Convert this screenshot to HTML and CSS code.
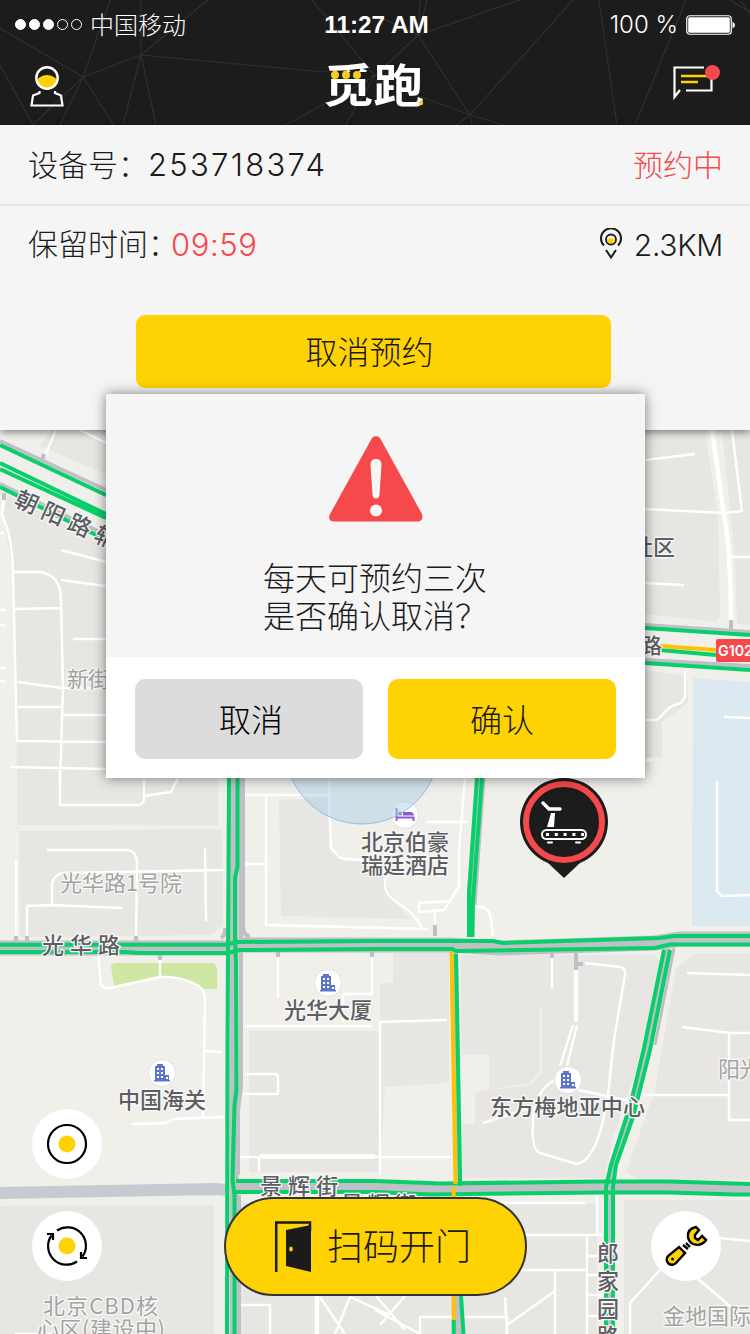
FILE: index.html
```html
<!DOCTYPE html>
<html lang="zh-CN">
<head>
<meta charset="utf-8">
<title>觅跑</title>
<link rel="stylesheet" href="styles.css">
</head>
<body>
<div class="screen">
  <header class="header">
    <svg class="header-mesh" viewBox="0 0 750 125" aria-hidden="true">
      <path d="M0 28L83 77L141 55L324 72L375 76M110 0L83 77L33 125M83 77L114 125M141 0V55L208 0M141 55L123 125M141 55L156 125M0 65L33 125M83 77L60 125M312 0L375 76L286 125M375 76L345 125M375 76L418 35L520 0M418 35L427 0M418 35L420 0M375 15L418 35L470 115L375 80M470 115L573 0M470 115L456 125M470 115L505 125M470 115L472 125M599 0L617 125M686 0L635 125M730 0L750 12M740 0L750 14"/>
    </svg>
    <div class="status">
      <div class="carrier">
        <span class="dots"><i class="on"></i><i class="on"></i><i class="on"></i><i></i><i></i></span>
        <span class="operator">中国移动</span>
      </div>
      <div class="clock">11:27 AM</div>
      <div class="power">
        <span>100 %</span>
        <svg width="50" height="20" viewBox="0 0 50 20"><rect x=".75" y=".75" width="44.5" height="18.5" rx="3" fill="none" stroke="#fff" stroke-width="1.2"/><rect x="2.2" y="2.2" width="41.6" height="15.6" rx="1.5" fill="#fff"/><path d="M46.5 6.5Q49 8 49 10T46.5 13.5Z" fill="#fff"/></svg>
      </div>
    </div>
    <nav class="nav">
      <svg class="user" width="36" height="42" viewBox="0 0 36 42">
        <path d="M7.500 13Q17 5 26.500 13Q26 23 17 23T7.500 13Z" fill="#ffd303"/>
        <circle cx="17" cy="12" r="10.700" fill="none" stroke="#fff" stroke-width="2.400"/>
        <path d="M9.500 25V27L3 29.500L1.500 39.500H32.500L31 29.500L25 27V25" fill="none" stroke="#fff" stroke-width="2.200"/>
      </svg>
      <svg class="brand" width="108" height="46" viewBox="0 0 108 46">
        <text x="1" y="40" textLength="101" lengthAdjust="spacingAndGlyphs">觅跑</text>
        <path d="M3 10H48V17H3Z" fill="#1c1c1c"/>
        <g fill="#f9cc1c"><circle cx="13" cy="13" r="4"/><circle cx="24" cy="13" r="4"/><circle cx="35" cy="13" r="4"/><circle cx="99" cy="41" r="2.200"/></g>
      </svg>
      <svg class="message" width="48" height="40" viewBox="0 0 48 40">
        <path d="M32 2.500H2.500V32L8 25M14 25.500H39.500V14" fill="none" stroke="#fff" stroke-width="2.200"/>
        <path d="M9 11H35M9 17H26" stroke="#ffd303" stroke-width="2.400"/>
        <circle cx="40.500" cy="7.500" r="7.500" fill="#f6494b"/>
      </svg>
    </nav>
  </header>

  <section class="booking">
    <div class="row row-device">
      <div><span class="label">设备号：</span><span class="number">253718374</span></div>
      <span class="state">预约中</span>
    </div>
    <div class="row row-time">
      <div><span class="label">保留时间：</span><span class="timer">09:59</span></div>
      <div class="distance">
        <svg width="24" height="32" viewBox="0 0 24 32" fill="none" stroke="#1b1b1b"><path d="M5 17.500A10 10 0 1 1 19 17.500" stroke-width="2"/><circle cx="12" cy="11.500" r="5" stroke-width="1.800"/><path d="M8 11.500Q12 9 16 11.500A4 4 0 0 1 8 11.500Z" fill="#ffd303" stroke="none"/><path d="M7 22L12 29.500L17 22" stroke-width="2"/></svg>
        <span>2.3KM</span>
      </div>
    </div>
    <button class="cancel-booking">取消预约</button>
  </section>

  <main class="map">
    <svg class="map-canvas" viewBox="0 430 750 904">
      <rect y="430" width="750" height="904" fill="#f1efea"/>
      <g class="block">
        <path d="M52 430H106V474L40 446ZM8 495L106 545V778H17L14 580L3 515ZM17 740H218V825H17ZM19 831L222 829L223 925L211 935L20 937Z"/>
        <path d="M645 430H705L718 515L720 615L716 622L645 614ZM722 430H750V625L737 624L735 560ZM645 670L687 676L688 703L662 722V757H645Z"/>
        <path d="M279 800L327 798L330 850L343 861L384 863Q383 892 410 919L281 916ZM249 1031H380V1172H249Z"/>
        <path d="M393 953H449V1083L385 1087L380 1172V983H393ZM461 955H655L660 962L636 1070L614 1135L604 1178H462ZM697 953H750V1180H640L626 1172L655 1090L676 968Z"/>
        <path d="M0 1206L214 1205V1334H0ZM240 1203H597V1334H240ZM624 1200H750V1334H624Z"/>
      </g>
      <path class="patch" d="M462 1055H489V1090L531 1085L542 1073V1007H540V1071L530 1083L475 1092V1124H462ZM385 1087L450 1083V1175H385Z"/>
      <path d="M693 678L750 682V926H692Z" fill="#dde9f0"/>
      <path d="M111 966Q112 963 116 963H214L217 968V989H204L192 981L162 976L114 986Z" fill="#cfe7a5"/>

      <g class="lane">
        <path d="M56 430L44 458M80 430L106 443M4 493L2 515Q12 535 13 572L17 741L106 742M14 572H40Q61 575 61 600L63 690L60 778M61 580L106 586M15 609L61 608M73 639H106M18 682L61 688H106M18 707H61M62 715H106M61 550L106 562M10 767L106 769M0 610H6M0 625H5M0 668H6M0 681H5M0 534L4 532"/>
        <path d="M645 460L695 454M645 509L725 513L742 511L732 430M731 557H750M645 583L684 585M685 671V697L681 703Q671 705 667 710L657 720H645M645 760H653M724 717L750 718M717 781V891L722 896L750 895"/>
        <path d="M60 770V805H138Q144 805 144 798V770M144 796L171 792L178 778M47 850H128Q137 852 137 862L136 940M52 905V883Q55 873 65 873L225 870M205 848L206 921M16 860V940M27 940V906L52 905L122 908"/>
        <path d="M98 955L101 984Q103 989 110 988L160 977Q180 976 197 985Q205 990 205 1000L203 1117M160 957V976M205 1051L222 1052M132 1124L166 1123L174 1119L224 1117"/>
        <path d="M245 795H330M266 796V925L428 929M245 864H265M329 778V798L331 848L340 858L372 861M278 957V998M372 955V994H343V1022M245 1026H372M245 1074H275Q278 1074 278 1078V1094H243M238 1157H258M259 1171V1157"/>
        <path d="M465 778L459 850V887L444 910L419 912V903L450 901L456 890M427 822H468M385 870V885Q385 895 398 903Q415 913 422 928M475 907Q490 905 491 920L493 936M435 913V930"/>
        <path d="M552 955V988M585 963L620 967Q626 968 625 975L614 1040L608 1095Q598 1160 577 1164L540 1153Q531 1150 533 1120T555 1080M578 1090L630 1101M483 1123L530 1108M573 1025L560 1066M577 1025L567 1066M380 1175V1022L447 1020M259 1157H450"/>
        <path d="M687 973L750 975M682 1027L730 1033H750M729 1033V1120H750M643 1095H729M729 1040V1095"/>
        <path d="M240 1305H270V1334M320 1297L345 1334M350 1297L335 1334M350 1297L390 1315M376 1296L405 1330M375 1310L420 1334M405 1296L380 1325M500 1203H585M597 1195V1234M520 1235H605M587 1235V1334M520 1270H587M555 1270V1334M555 1291L507 1325M587 1256H605M587 1275H605M587 1295H605M587 1316H605M505 1297L507 1334M420 1334V1317H507V1334M660 1270L630 1303V1334M697 1278L730 1306M720 1238L750 1241M15 1334H70"/>
      </g>
      <g class="lane wide"><path d="M712 430L724 515Q731 550 731 625M576 970V1022M259 1156.500H375M317 1296V1334"/></g>

      <g class="asphalt">
        <path d="M0 441L106 490M0 484L110 537M645 625L750 632M645 660L750 666M44 454L42 461M4 493L4 500M731 620V630" stroke-width="4"/>
        <path d="M0 948H228L240 945H450L500 948L655 943L680 939H750" stroke-width="15"/>
        <path d="M243 778V925Q243 936 250 936M221 938Q226 935 225 928" stroke-width="4"/>
        <path d="M234 778V1334" stroke-width="9"/>
        <path d="M241 778V1086L238 1110V1175M239 1195V1334" stroke-width="4"/>
        <path d="M235 1187H375L440 1189L600 1187H670L750 1190" stroke-width="12"/>
        <path d="M480 778L471 893V937M454 952L458 1180M459 1296V1334M667 948L647 1048L631 1110L613 1165L610 1187V1334" stroke-width="8"/>
        <path d="M484 778L475 905M674 948L655 1045" stroke-width="3"/>
        <path d="M576 953V970M435 925V936M576 964H583M552 953V958M372 952V957M278 952V957M160 955V960M136 936V942M27 936V942M16 936V942" stroke-width="4"/>
        <path d="M0 1193L215 1189L226 1190" stroke="#c7cbd0" stroke-width="12"/>
      </g>

      <g class="traffic">
        <path d="M0 445L106 495M0 463L106 514M0 469L106 518M0 487L106 540M645 628L750 635M660 650L716 655M645 663L750 670"/>
        <path d="M229 778L227.500 1040L227 1334M237.500 778V867L235 878V940L236 960L236.500 1090L234.500 1105L232.500 1180L234.500 1195V1334"/>
        <path d="M0 944.700H226L237 942L375 941H493L503 943L660 938L675 936H750M0 952H125L140 953H228L240 950L375 949H452L456 951L655 948L670 944.500H750"/>
        <path d="M477 778L469 893V937M482 778L473 900L472 937M456 954L460 1178V1186M453.700 1320V1334M461 1296L463.500 1334"/>
        <path d="M664 950L644 1048L631 1103L611 1165L606 1187V1334M670 950L650 1050L633 1117L616 1165L613 1187V1334"/>
        <path d="M236 1181H375L440 1183.500L600 1181.500H670L750 1184M236 1192H375L430 1194.500L600 1192.500H670L735 1194.500H750"/>
        <path class="slow" d="M660 646L716 650M451.500 952L455.500 1184M453.700 1187V1320"/>
      </g>

      <g class="poi">
        <g transform="translate(405 815)"><circle r="13.500"/><path d="M-8.500 -7V6M-8.500 2.500H9" fill="none" stroke="#875bd8" stroke-width="1.800"/><path d="M-2 -3H5Q9 -3 9 .5H-2ZM7.500 2H9.500V6H7.500Z" fill="#875bd8"/><circle class="head" cx="-5" cy="-1.500" r="1.900"/></g>
        <g transform="translate(328 983)"><circle r="13.500"/><use href="#tower"/></g>
        <g transform="translate(162 1073)"><circle r="13.500"/><use href="#tower"/></g>
        <g transform="translate(568 1080)"><circle r="13.500"/><use href="#tower"/></g>
      </g>
      <circle cx="362" cy="747" r="77" fill="#a5cbe6" fill-opacity=".45" stroke="#8fbfe3" stroke-width="1"/>
      <defs>
        <g id="tower"><path d="M-8 8.500V7H-7V-7H-5V-9H1V-7H3V2H7V7H8V8.500Z" fill="#6076cb"/><path d="M-5 -5H-3V-3H-5ZM-1 -5H1V-3H-1ZM-5 -1H-3V1H-5ZM-1 -1H1V1H-1ZM-5 3H-3V5H-5ZM-1 3H1V5H-1ZM4 4H6V6H4Z" fill="#fff"/></g>
      </defs>

      <g class="names">
        <text transform="translate(13 505) rotate(24)" font-size="23" textLength="110">朝阳路辅</text>
        <text class="dim" x="67" y="687" textLength="43">新街</text>
        <text x="631" y="555" textLength="44">社区</text>
        <text x="641" y="653" font-size="21">路</text>
        <text x="42" y="953" textLength="78">光华路</text>
        <text class="dim" x="60" y="891" textLength="122">光华路1号院</text>
        <text x="361" y="850" textLength="88">北京伯豪</text>
        <text x="361" y="873" textLength="88">瑞廷酒店</text>
        <text x="284" y="1018" textLength="88">光华大厦</text>
        <text x="118" y="1108" textLength="88">中国海关</text>
        <text x="490" y="1115" textLength="155">东方梅地亚中心</text>
        <text class="dim" x="718" y="1077" textLength="43">阳光</text>
        <text x="260" y="1194" textLength="78">景辉街</text>
        <text x="341" y="1212" textLength="75">景辉街</text>
        <text class="dim" x="43" y="1314" textLength="115">北京CBD核</text>
        <text class="dim" x="37" y="1337" textLength="128">心区(建设中)</text>
        <text class="dim" x="663" y="1324" textLength="88">金地国际</text>
        <text x="597" y="1261">郎</text>
        <text x="597" y="1289">家</text>
        <text x="597" y="1317">园</text>
        <text x="597" y="1344">路</text>
      </g>
      <rect x="716" y="639" width="50" height="23" rx="2" fill="#f6494b"/>
      <text class="shield" x="718" y="656" textLength="35" lengthAdjust="spacingAndGlyphs">G102</text>

      <g transform="translate(564 822)">
        <path d="M0 56L-16 41A44 44 0 1 1 16 41Z" fill="#1c1c1c"/>
        <circle r="38" fill="none" stroke="#f6494b" stroke-width="6"/>
        <path d="M-21 -19L-15 -13H-4" fill="none" stroke="#fff" stroke-linecap="round" stroke-width="3.400"/>
        <path d="M-13 -9H-9L-10 5H-17Z" fill="#fff"/>
        <rect x="-22" y="8" width="44" height="9" rx="4.500" fill="none" stroke="#fff" stroke-width="2"/>
        <path d="M-18 12.500H20" stroke="#fff" stroke-width="3" stroke-dasharray="3 5.800"/>
        <path d="M-16 20.500H-12M12 20.500H16" stroke="#fff" stroke-width="2" stroke-linecap="round"/>
      </g>
    </svg>

    <div class="controls">
      <div class="stack">
        <button class="round" aria-label="定位"><svg width="70" height="70" viewBox="0 0 70 70"><circle cx="35" cy="35" r="19" fill="none" stroke="#000" stroke-width="2.200"/><circle cx="35" cy="35" r="8.500" fill="#ffd303"/></svg></button>
        <button class="round" aria-label="刷新"><svg width="70" height="70" viewBox="0 0 70 70"><circle cx="35" cy="35" r="8.500" fill="#ffd303"/><g fill="none" stroke="#000" stroke-width="2.200"><path d="M25 19.500A18.500 18.500 0 0 1 50.500 45.500M45 50.500A18.500 18.500 0 0 1 19.500 24.500M15 23H21V29M49 41V47H55"/></g></svg></button>
      </div>
      <button class="scan">
        <svg width="38" height="52" viewBox="0 0 38 52"><path d="M2.200 51V1.500H36V10" fill="none" stroke="#1b1b1b" stroke-width="2.500"/><path d="M12 9L37 4V51L12 45Z" fill="#1b1b1b"/><ellipse cx="17" cy="28" rx="1.800" ry="2.600" fill="#ffd303"/></svg>
        <span>扫码开门</span>
      </button>
      <button class="round" aria-label="报修"><svg width="70" height="70" viewBox="0 0 70 70"><g stroke="#000" stroke-width="2.400" stroke-linejoin="miter"><path d="M28 36L34 42L25 52A5 5 0 1 1 17 45Z" fill="#ffd303"/><path d="M37 26Q36 18 45 16L48 19L44 24V27L47 29L51 25L55 29Q50 36 42 33Q38 31 37 26Z" fill="#ffd303"/><path d="M32 34L37 38M35 32L39 36" fill="none"/></g><circle cx="21.500" cy="48" r="1.500"/></svg></button>
    </div>
  </main>

  <div class="dialog" role="alertdialog">
    <div class="dialog-body">
      <svg width="96" height="86" viewBox="0 0 96 86"><path d="M44 2Q48 -2 52 2L94 78Q96 85 90 85.500H6Q0 85 1.500 79Z" fill="#f6494b"/><path d="M42.500 28Q43 23 48 23T53.500 28L51.500 59Q51 62.500 48 62.500T44.500 59Z" fill="#f5f5f5"/><circle cx="48" cy="74.500" r="6" fill="#f5f5f5"/></svg>
      <p>每天可预约三次<br>是否确认取消？</p>
    </div>
    <div class="dialog-actions">
      <button class="no">取消</button>
      <button class="yes">确认</button>
    </div>
  </div>
</div>
</body>
</html>
```

FILE: styles.css
```css
* { box-sizing: border-box; }
body {
  margin: 0;
  font-family: "Noto Sans CJK SC", sans-serif;
  font-weight: 300;
  color: #1b1b1b;
}
button {
  border: 0;
  padding: 0;
  font: inherit;
  color: inherit;
}
svg { display: block; }
.screen {
  position: relative;
  display: flex;
  flex-direction: column;
  width: 750px;
  height: 1334px;
  overflow: hidden;
}

.header {
  position: relative;
  flex: 0 0 125px;
  background: #1c1c1c;
  color: #fff;
}
.header-mesh {
  position: absolute;
  inset: 0;
  fill: none;
  stroke: #313131;
  stroke-width: 1.1;
}
.status {
  position: relative;
  display: grid;
  grid-template-columns: 1fr auto 1fr;
  align-items: center;
  height: 48px;
  padding: 0 14px 0 15px;
}
.carrier { display: flex; align-items: center; gap: 8px; font-size: 24px; line-height: 48px; }
.operator { margin-top: -2px; }
.dots { display: flex; gap: 3px; }
.dots i { width: 11px; height: 11px; border: 1px solid #fff; border-radius: 50%; }
.dots .on { background: #fff; }
.clock { font: 700 24.3px/48px "Liberation Sans", sans-serif; padding: 1px 0 0 2px; }
.power { display: flex; align-items: center; justify-content: flex-end; gap: 8px; font: 300 24px/48px Inter, sans-serif; }
.nav {
  position: relative;
  display: grid;
  grid-template-columns: 1fr auto 1fr;
  padding: 14px 30px 0;
}
.user { margin-top: 4px; }
.brand { margin-left: 2px; }
.brand text { font-size: 46px; font-weight: 700; fill: #fff; }
.message { justify-self: end; margin: 3px 0 0; }

.booking {
  position: relative;
  z-index: 1;
  flex: 0 0 305px;
  display: flex;
  flex-direction: column;
  background: #f5f5f5;
  box-shadow: 0 2px 8px rgba(0, 0, 0, .5);
}
.row {
  display: flex;
  justify-content: space-between;
  align-items: center;
  padding: 0 27px 0 28px;
  font-size: 30px;
}
.row > div { display: flex; align-items: center; }
.row-device { height: 81px; border-bottom: 2px solid #e6e6e6; }
.row-time { height: 77px; }
.label { width: 120px; margin-top: -3px; white-space: nowrap; }
.row-time .label { width: 143px; margin-top: -5px; }
.number, .timer, .distance { font-family: Inter, sans-serif; font-size: 31px; }
.number { letter-spacing: 2.3px; }
.timer { letter-spacing: .6px; margin-top: -1px; }
.state, .timer { color: #f6494b; }
.state { margin-top: -3px; }
.distance { gap: 11px; font-size: 30px; letter-spacing: -.3px; }
.distance svg { margin-top: -2px; }
.cancel-booking {
  width: 475px;
  height: 73px;
  margin: 32px 0 0 136px;
  padding: 0 8px 3px 0;
  border-radius: 9px;
  background: #ffd303;
  font-size: 32px;
}

.map { position: relative; flex: 1; }
.map-canvas { width: 750px; height: 904px; }
.block { fill: #e7e6e2; }
.patch { fill: #f1efea; }
.lane { fill: none; stroke: #fff; stroke-width: 2.4; stroke-linejoin: round; }
.wide { stroke-width: 4.5; }
.asphalt { fill: none; stroke: #bec0c6; }
.traffic { fill: none; stroke: #08cf6b; stroke-width: 4; stroke-linejoin: round; }
.slow { stroke: #ffc107; }
.poi circle { fill: #fff; stroke: #dddcda; stroke-width: .8; }
.poi .head { fill: #875bd8; stroke: none; }
.names {
  font-size: 22px;
  font-weight: 500;
  fill: #5c5e63;
  stroke: #f8f8f6;
  stroke-width: 2.6px;
  stroke-linejoin: round;
  paint-order: stroke;
}
.names .dim { fill: #a3a3a3; font-weight: 400; }
.shield { font: 600 15px Inter, sans-serif; fill: #fff; }

.controls {
  position: absolute;
  inset: auto 0 0;
  display: flex;
  align-items: flex-end;
  padding: 0 29px 38px 32px;
}
.stack { display: flex; flex-direction: column; gap: 32px; margin-bottom: 15px; }
.round { width: 70px; height: 70px; border-radius: 50%; background: #fff; }
.controls > .round { margin: 0 0 15px auto; }
.scan {
  display: flex;
  align-items: center;
  gap: 15px;
  width: 303px;
  height: 99px;
  margin-left: 122px;
  padding-left: 48px;
  border: 2px solid #333;
  border-radius: 50px;
  background: #ffd303;
  font-size: 36px;
}
.scan span { margin-top: -5px; }

.dialog {
  position: absolute;
  z-index: 2;
  left: 106px;
  top: 394px;
  width: 539px;
  height: 384px;
  display: flex;
  flex-direction: column;
  background: #fff;
  box-shadow: 0 0 12px rgba(0, 0, 0, .5);
}
.dialog-body {
  flex: 0 0 263px;
  display: flex;
  flex-direction: column;
  align-items: center;
  padding-top: 42px;
  background: #f5f5f5;
}
.dialog-body p { width: 225px; margin: 35px 0 0; font-size: 32px; line-height: 38px; white-space: nowrap; }
.dialog-actions { display: flex; gap: 25px; padding: 22px 29px; }
.dialog-actions button { width: 228px; height: 80px; border-radius: 10px; padding-bottom: 3px; font-size: 32px; }
.dialog-actions .no { background: #dcdcdc; color: #000; padding-left: 4px; }
.yes { background: #ffd303; }
```
